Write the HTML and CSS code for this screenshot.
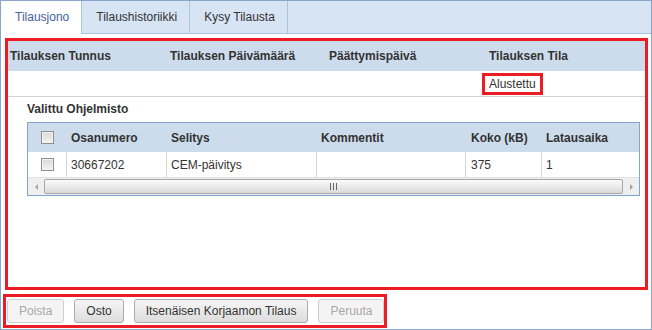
FILE: index.html
```html
<!DOCTYPE html>
<html lang="fi">
<head>
  <meta charset="UTF-8" />
  <title>Tilausjono</title>
  <link rel="stylesheet" href="styles.css">
</head>
<body>
  <div class="frame">
    <!-- Tabs -->
    <div class="tabs">
      <div class="tab active">Tilausjono</div>
      <div class="tab">Tilaushistoriikki</div>
      <div class="tab">Kysy Tilausta</div>
    </div>

    <div class="panel">
      <!-- Order queue -->
      <div class="order-box">
        <div class="order-head">
          <div>Tilauksen Tunnus</div>
          <div>Tilauksen Päivämäärä</div>
          <div>Päättymispäivä</div>
          <div>Tilauksen Tila</div>
        </div>
        <div class="order-row">
          <div></div>
          <div></div>
          <div></div>
          <div><span class="status">Alustettu</span></div>
        </div>

        <!-- Selected software -->
        <div class="software">
          <div class="software-title">Valittu Ohjelmisto</div>
          <div class="grid">
            <div class="grid-head">
              <div class="cell col-check"><span class="checkbox"></span></div>
              <div class="cell col-part">Osanumero</div>
              <div class="cell col-desc">Selitys</div>
              <div class="cell col-comment">Kommentit</div>
              <div class="cell col-size">Koko (kB)</div>
              <div class="cell col-time">Latausaika</div>
            </div>
            <div class="grid-row">
              <div class="cell col-check"><span class="checkbox"></span></div>
              <div class="cell col-part">30667202</div>
              <div class="cell col-desc">CEM-päivitys</div>
              <div class="cell col-comment"></div>
              <div class="cell col-size">375</div>
              <div class="cell col-time">1</div>
            </div>
            <div class="hscroll">
              <span class="arrow arrow-left"></span>
              <div class="thumb">
                <svg width="7" height="7" viewBox="0 0 7 7">
                  <rect x="0" y="0" width="1" height="7" fill="#666" />
                  <rect x="3" y="0" width="1" height="7" fill="#666" />
                  <rect x="6" y="0" width="1" height="7" fill="#666" />
                </svg>
              </div>
              <span class="arrow arrow-right"></span>
            </div>
          </div>
        </div>
      </div>

      <!-- Actions -->
      <div class="actions">
        <button class="btn" disabled>Poista</button>
        <button class="btn">Osto</button>
        <button class="btn">Itsenäisen Korjaamon Tilaus</button>
        <button class="btn" disabled>Peruuta</button>
      </div>
    </div>
  </div>
</body>
</html>
```

FILE: styles.css
```css
body {
  margin: 0;
  font-family: "Liberation Sans", Arial, sans-serif;
  font-size: 12px;
  color: #333;
  background-color: #fff;
}

.frame {
  width: 652px;
  height: 330px;
  box-sizing: border-box;
  border: 1px solid #8aa6ca;
  display: flex;
  flex-direction: column;
}

/* Tabs */
.tabs {
  display: flex;
  align-items: flex-start;
  height: 32px;
  background-color: #d6e4f4;
  border-bottom: 1px solid #a9c3e3;
}

.tab {
  height: 32px;
  line-height: 32px;
  padding: 0 12px 0 14px;
  border-right: 1px solid #a9c3e3;
  color: #333;
}

.tab.active {
  height: 33px;
  margin-bottom: -1px;
  background-color: #fff;
  color: #46639a;
}

.panel {
  flex: 1;
  background-color: #fff;
}

/* Order queue */
.order-box {
  height: 252px;
  box-sizing: border-box;
  margin: 4px 3px 0 4px;
  border: 3px solid #ed1c24;
}

.order-head,
.order-row {
  display: grid;
  grid-template-columns: 160px 159px 160px 1fr;
  align-items: center;
  padding-left: 2px;
}

.order-head {
  height: 30px;
  background-color: #cddcec;
  font-weight: bold;
}

.order-row {
  height: 25px;
  border-bottom: 1px solid #d4d4d4;
}

.status {
  display: inline-block;
  margin-left: -7px;
  padding: 0 4px;
  line-height: 16px;
  border: 3px solid #ed1c24;
}

/* Software grid */
.software {
  padding: 4px 5px 0 19px;
}

.software-title {
  font-weight: bold;
  line-height: 16px;
  margin-bottom: 5px;
}

.grid {
  border: 1px solid #86a4c6;
  border-bottom-color: #7aa3d4;
}

.grid-head,
.grid-row {
  display: flex;
}

.grid-head {
  height: 29px;
  background-color: #cddcec;
  font-weight: bold;
}

.grid-row {
  height: 25px;
  background-color: #fff;
}

.cell {
  box-sizing: border-box;
  display: flex;
  align-items: center;
  padding-left: 4px;
  border-right: 1px solid transparent;
}

.grid-row .cell {
  border-right-color: #d4d4d4;
}

.grid-row .col-time {
  border-right: none;
}

.col-check {
  width: 39px;
  padding-left: 0;
  justify-content: center;
}

.col-part { width: 100px; }
.col-desc { width: 150px; }
.col-comment { width: 149px; }
.col-size { width: 76px; padding-left: 5px; }
.col-time { flex: 1; }

.checkbox {
  width: 11px;
  height: 11px;
  border: 1px solid #8f8f8f;
  background: linear-gradient(#d8d8d8, #f4f4f4);
  box-shadow: inset 0 0 0 1px #f2f2f2;
}

/* Horizontal scrollbar */
.hscroll {
  display: flex;
  align-items: center;
  height: 17px;
  background-color: #efefef;
  border-top: 1px solid #e2e2e2;
}

.arrow {
  width: 16px;
  height: 17px;
  display: flex;
  align-items: center;
  justify-content: center;
}

.arrow::before {
  content: "";
  border-top: 3px solid transparent;
  border-bottom: 3px solid transparent;
}

.arrow-left::before {
  border-right: 3px solid #a3a3a3;
}

.arrow-right::before {
  border-left: 3px solid #a3a3a3;
}

.thumb {
  flex: 1;
  height: 13px;
  display: flex;
  align-items: center;
  justify-content: center;
  border: 1px solid #a8a8a8;
  border-radius: 2px;
  background: linear-gradient(#fbfbfb, #dadada);
}

/* Action buttons */
.actions {
  display: flex;
  gap: 10px;
  width: fit-content;
  margin: 4px 0 0 2px;
  padding: 2px 0 2px 1px;
  border: 3px solid #ed1c24;
}

.btn {
  height: 24px;
  padding: 0 11px;
  font: inherit;
  color: #333;
  border: 1px solid #acacac;
  border-radius: 3px;
  background: linear-gradient(#f6f6f6, #dcdcdc);
  cursor: pointer;
}

.btn:disabled {
  color: #a8a8a8;
  border-color: #cfcfcf;
  background: #f4f4f4;
  cursor: default;
}
```
